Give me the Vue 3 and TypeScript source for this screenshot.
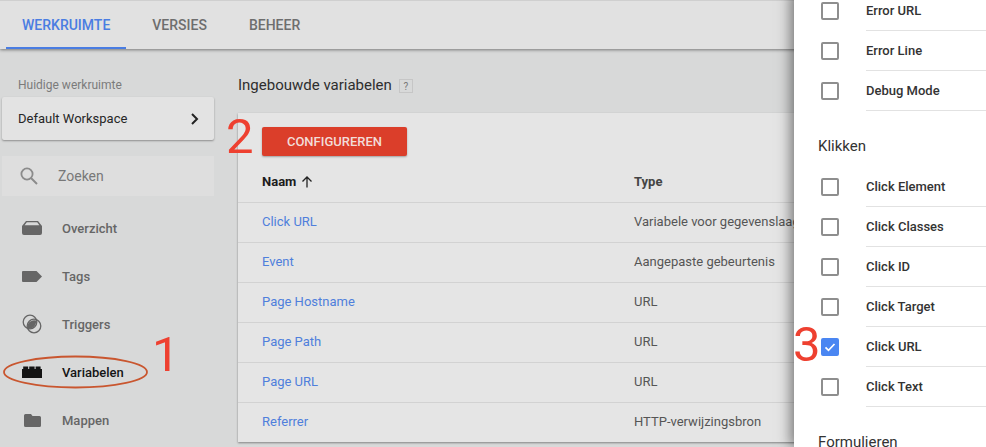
<script setup lang="ts">
const tabs = ['WERKRUIMTE', 'VERSIES', 'BEHEER']
const nav = [
  { label: 'Overzicht', icon: 'overview' },
  { label: 'Tags', icon: 'tag' },
  { label: 'Triggers', icon: 'trigger' },
  { label: 'Variabelen', icon: 'variable', active: true },
  { label: 'Mappen', icon: 'folder' },
]
const rows = [
  ['Click URL', 'Variabele voor gegevenslaag'],
  ['Event', 'Aangepaste gebeurtenis'],
  ['Page Hostname', 'URL'],
  ['Page Path', 'URL'],
  ['Page URL', 'URL'],
  ['Referrer', 'HTTP-verwijzingsbron'],
]
const errors = ['Error URL', 'Error Line', 'Debug Mode']
const clicks = ['Click Element', 'Click Classes', 'Click ID', 'Click Target', 'Click URL', 'Click Text']
</script>

<template>
  <div class="page">
    <header class="topbar">
      <a v-for="(t, i) in tabs" :key="t" class="tab" :class="{ on: i === 0 }">{{ t }}</a>
    </header>

    <div class="content">
      <aside class="side">
        <div class="cap">Huidige werkruimte</div>
        <div class="ws">
          <span>Default Workspace</span>
          <svg width="10" height="14" viewBox="0 0 10 14"><path d="M2 2l5 5-5 5" fill="none" stroke="#222" stroke-width="2" /></svg>
        </div>
        <div class="search">
          <svg width="20" height="20" viewBox="0 0 20 20"><circle cx="8" cy="8" r="5.6" fill="none" stroke="#8b8b8b" stroke-width="1.8" /><path d="M12 12l6 6" stroke="#8b8b8b" stroke-width="2" /></svg>
          <span>Zoeken</span>
        </div>
        <nav class="nav">
          <div v-for="n in nav" :key="n.label" class="item" :class="{ active: n.active }">
            <span class="ico">
              <svg v-if="n.icon === 'overview'" width="20" height="14" viewBox="0 0 20 14"><path d="M4 0h12l4 5v7a2 2 0 0 1-2 2H2a2 2 0 0 1-2-2V5zM4.800 1.300L2.600 4.300h14.800l-2.200-3z" fill="#666" fill-rule="evenodd" /></svg>
              <svg v-else-if="n.icon === 'tag'" width="20" height="11" viewBox="0 0 20 11"><path d="M1 0h13.500L20 5.500 14.500 11H1a1 1 0 0 1-1-1V1a1 1 0 0 1 1-1z" fill="#666" /></svg>
              <svg v-else-if="n.icon === 'trigger'" width="20" height="20" viewBox="0 0 20 20"><circle cx="8" cy="8" r="6.800" fill="none" stroke="#666" stroke-width="1.300" /><circle cx="12" cy="12" r="6.800" fill="none" stroke="#666" stroke-width="1.300" /><path d="M14 6.400A6.800 6.800 0 0 0 5.600 14.400 7 7 0 0 0 14 6.400z" fill="#666" /></svg>
              <svg v-else-if="n.icon === 'variable'" width="20" height="12" viewBox="0 0 20 12"><path d="M0 3h1.200V.500h5V3h1V.500h5.400V3h1V.500h5V3H20v9H0z" fill="#141414" /></svg>
              <svg v-else width="17" height="13" viewBox="0 0 17 13"><path d="M1.500 0H7l1.500 2h7A1.500 1.500 0 0 1 17 3.500v8a1.500 1.500 0 0 1-1.500 1.500h-14A1.500 1.500 0 0 1 0 11.500v-10A1.500 1.500 0 0 1 1.500 0z" fill="#666" /></svg>
            </span>
            <span>{{ n.label }}</span>
          </div>
        </nav>
      </aside>

      <main class="main">
        <h1 class="title">Ingebouwde variabelen <span class="q">?</span></h1>
        <section class="card">
          <div class="actions"><button class="btn">CONFIGUREREN</button></div>
          <div class="row head">
            <div class="c1">Naam
              <svg width="12" height="12" viewBox="0 0 12 12"><path d="M6 11.500V1M1.500 5.500L6 1l4.500 4.500" fill="none" stroke="#222" stroke-width="1.300" /></svg>
            </div>
            <div class="c2">Type</div>
          </div>
          <div v-for="r in rows" :key="r[0]" class="row">
            <div class="c1 link">{{ r[0] }}</div>
            <div class="c2">{{ r[1] }}</div>
          </div>
        </section>
      </main>
    </div>

    <aside class="panel">
      <div v-for="e in errors" :key="e" class="check">
        <span class="box"></span><span class="lbl">{{ e }}</span>
      </div>
      <h2 class="group">Klikken</h2>
      <div v-for="c in clicks" :key="c" class="check">
        <span class="box" :class="{ sel: c === 'Click URL' }">
          <svg v-if="c === 'Click URL'" width="14" height="14" viewBox="0 0 14 14"><path d="M2.500 7.300l3 3 6-6.300" fill="none" stroke="#fff" stroke-width="1.700" /></svg>
        </span>
        <span class="lbl">{{ c }}</span>
      </div>
      <h2 class="group">Formulieren</h2>
    </aside>

    <svg class="ring" width="146" height="36" viewBox="0 0 146 36"><ellipse cx="72.500" cy="18" rx="71.500" ry="15.500" fill="none" stroke="#c9562f" stroke-width="1.800" /></svg>
    <span class="num n1">1</span>
    <span class="num n2">2</span>
    <span class="num n3">3</span>
  </div>
</template>

<style scoped>
.page {
  position: relative;
  width: 986px;
  height: 447px;
  overflow: hidden;
  background: #d8d9d9;
  font-family: Roboto, "Liberation Sans", sans-serif;
  font-size: 13px;
  color: #333;
}
.topbar {
  position: relative;
  z-index: 1;
  display: flex;
  gap: 10px;
  height: 49px;
  box-sizing: border-box;
  padding-left: 6px;
  background: #e1e1e1;
  border-top: 1px solid #cfcfcf;
  box-shadow: 0 1px 3px rgba(0, 0, 0, 0.45);
}
.tab {
  padding: 0 16px;
  height: 48px;
  box-sizing: border-box;
  line-height: 49px;
  font-size: 14px;
  font-weight: 500;
  color: #6e6e6e;
}
.tab.on {
  color: #4a7de2;
  border-bottom: 2px solid #4a7de2;
}
.content {
  display: flex;
  height: 398px;
}
.side {
  width: 212px;
  margin-left: 2px;
  flex: none;
}
.cap {
  margin: 28px 0 0 16px;
  height: 20px;
  line-height: 16px;
  font-size: 12px;
  color: #7b7b7b;
}
.ws {
  display: flex;
  align-items: center;
  justify-content: space-between;
  height: 43px;
  box-sizing: border-box;
  padding: 0 14px 0 16px;
  background: #e3e3e3;
  border-radius: 2px;
  box-shadow: 0 1px 2px rgba(0, 0, 0, 0.35);
  color: #262626;
}
.search {
  display: flex;
  align-items: center;
  gap: 19px;
  height: 40px;
  margin-top: 16px;
  padding-left: 17px;
  background: #dedede;
  color: #787878;
  font-size: 14px;
}
.nav {
  margin-top: 8px;
}
.item {
  display: flex;
  align-items: center;
  height: 48px;
  padding-left: 20px;
  font-weight: 500;
  font-size: 13px;
  color: #666;
}
.item.active {
  color: #141414;
}
.ico {
  display: flex;
  justify-content: center;
  width: 20px;
  margin-right: 20px;
}
.main {
  flex: 1;
  margin-left: 24px;
  min-width: 0;
}
.title {
  display: flex;
  align-items: center;
  gap: 7px;
  margin: 24px 0 0;
  height: 24px;
  font-size: 15px;
  font-weight: 400;
  color: #2e2e2e;
}
.q {
  width: 14px;
  height: 14px;
  box-sizing: border-box;
  border: 1px solid #c6c6c6;
  line-height: 13px;
  text-align: center;
  font-size: 10px;
  color: #777;
  margin-top: 2px;
}
.card {
  margin-top: 16px;
  background: #e5e5e5;
  box-shadow: 0 1px 2px rgba(0, 0, 0, 0.4);
}
.actions {
  height: 74px;
  box-sizing: border-box;
  padding: 14px 0 0 24px;
  margin-bottom: -26px;
}
.btn {
  display: block;
  width: 145px;
  height: 29px;
  padding: 0;
  border: 0;
  border-radius: 2px;
  background: #db3e2a;
  box-shadow: 0 1px 2px rgba(0, 0, 0, 0.3);
  font: 500 13px Roboto, sans-serif;
  color: #f2dcd8;
}
.row {
  display: flex;
  align-items: center;
  height: 40px;
  box-sizing: border-box;
  padding-bottom: 3px;
  border-top: 1px solid #d2d2d2;
}
.row.head {
  height: 41px;
  margin-top: -1px;
  padding-bottom: 0;
  border-top: 0;
  font-weight: 700;
  color: #222;
}
.c1 {
  display: flex;
  align-items: center;
  gap: 5px;
  width: 396px;
  padding-left: 24px;
  box-sizing: border-box;
}
.head .c1 { color: #1c1c1c; }
.c2 {
  white-space: nowrap;
  color: #555;
}
.head .c2 { color: #444; }
.link {
  color: #4f7fdc;
}
.panel {
  position: absolute;
  z-index: 2;
  top: -9px;
  bottom: 0;
  left: 794px;
  right: 0;
  padding-left: 27px;
  background: #fff;
  box-shadow: -3px 0 13px rgba(0, 0, 0, 0.5);
}
.check {
  display: flex;
  align-items: center;
  height: 40px;
}
.box {
  display: flex;
  align-items: center;
  justify-content: center;
  flex: none;
  width: 18px;
  height: 18px;
  box-sizing: border-box;
  border: 2px solid #8e8e8e;
  border-radius: 2px;
}
.box.sel {
  border-color: #4a86f2;
  background: #4a86f2;
}
.lbl {
  flex: 1;
  margin-left: 27px;
  height: 40px;
  line-height: 40px;
  box-sizing: border-box;
  border-bottom: 1px solid #e2e2e2;
  font-size: 13px;
  font-weight: 500;
  color: #333;
}
.group {
  margin: 0 0 0 -3px;
  height: 56px;
  box-sizing: border-box;
  padding-top: 29px;
  line-height: 12px;
  font-size: 15px;
  font-weight: 400;
  color: #333;
}
.ring {
  position: absolute;
  z-index: 3;
  left: 3px;
  top: 354px;
}
.num {
  position: absolute;
  z-index: 3;
  font-family: Roboto, sans-serif;
  font-size: 49px;
  line-height: 48px;
  color: #ee4030;
}
.n1 { left: 152px; top: 331px; }
.n2 { left: 226px; top: 113px; }
.n3 { left: 793px; top: 321px; }
</style>
